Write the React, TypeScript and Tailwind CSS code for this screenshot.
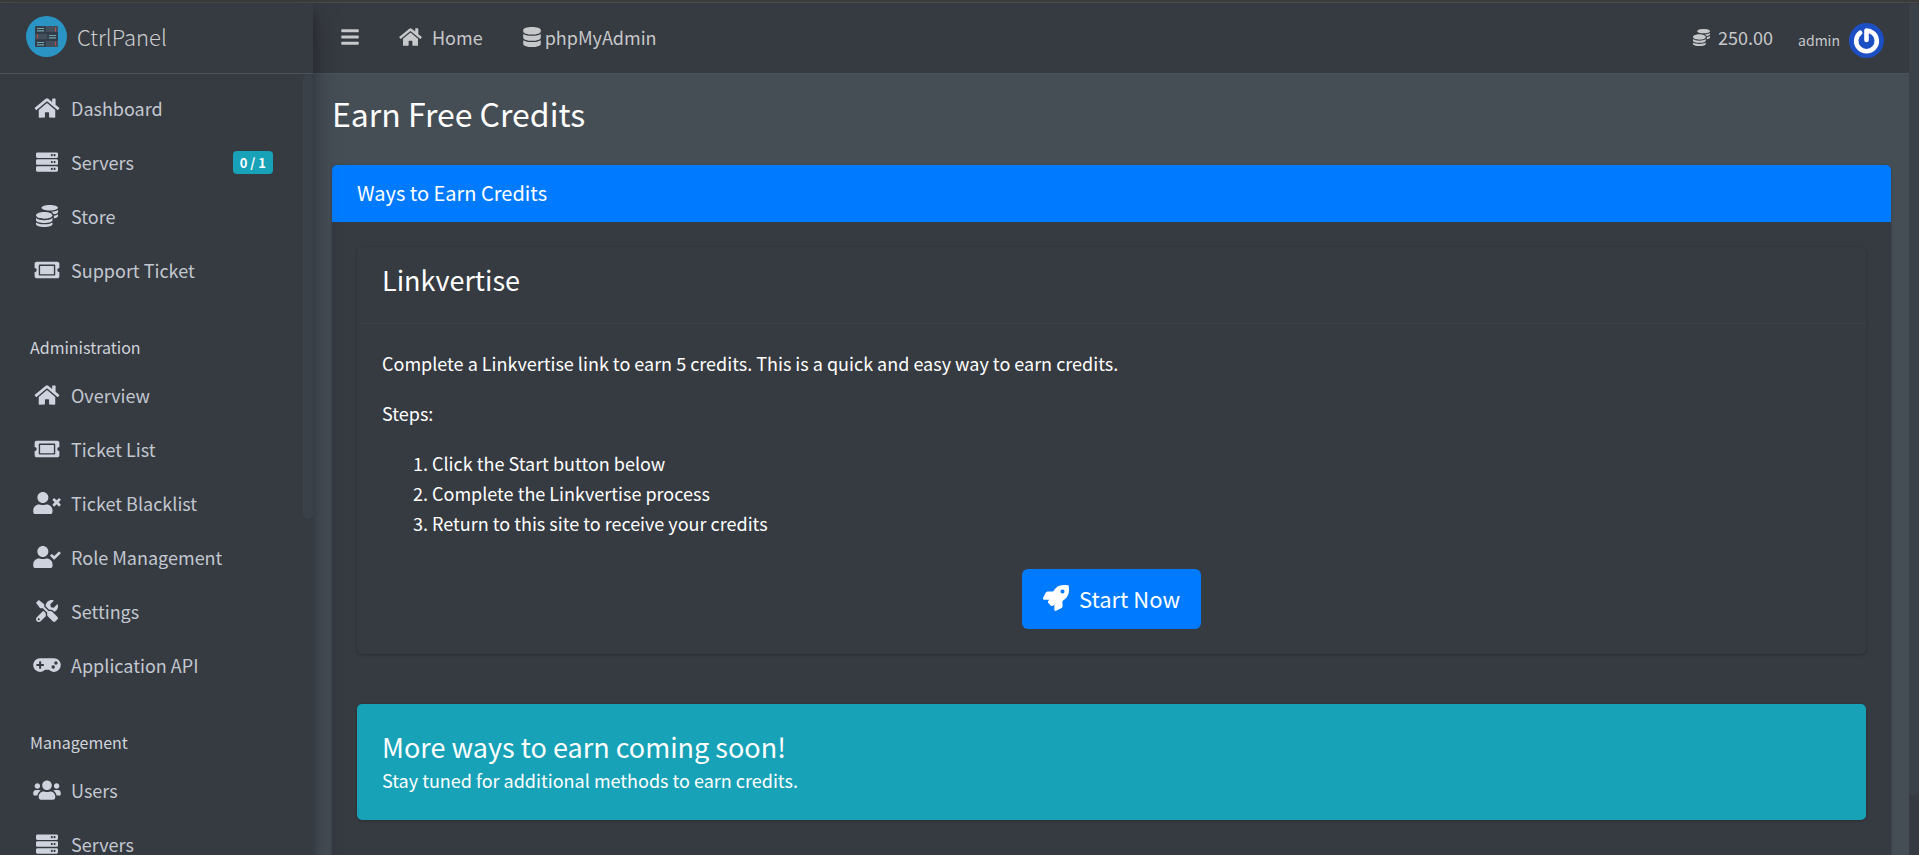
import React, { useState } from 'react';
import type { IconType } from 'react-icons';
import {
    FaBars,
    FaCoins,
    FaDatabase,
    FaGamepad,
    FaHome,
    FaRocket,
    FaServer,
    FaTicketAlt,
    FaTools,
    FaUserCheck,
    FaUsers,
    FaUserTimes,
} from 'react-icons/fa';

interface NavItem {
    label: string;
    icon: IconType;
    badge?: string;
}

interface NavGroup {
    title?: string;
    items: NavItem[];
}

const navGroups: NavGroup[] = [
    {
        items: [
            { label: 'Dashboard', icon: FaHome },
            { label: 'Servers', icon: FaServer, badge: '0 / 1' },
            { label: 'Store', icon: FaCoins },
            { label: 'Support Ticket', icon: FaTicketAlt },
        ],
    },
    {
        title: 'Administration',
        items: [
            { label: 'Overview', icon: FaHome },
            { label: 'Ticket List', icon: FaTicketAlt },
            { label: 'Ticket Blacklist', icon: FaUserTimes },
            { label: 'Role Management', icon: FaUserCheck },
            { label: 'Settings', icon: FaTools },
            { label: 'Application API', icon: FaGamepad },
        ],
    },
    {
        title: 'Management',
        items: [
            { label: 'Users', icon: FaUsers },
            { label: 'Servers', icon: FaServer },
        ],
    },
];

const steps = [
    'Click the Start button below',
    'Complete the Linkvertise process',
    'Return to this site to receive your credits',
];

const Logo: React.FC = () => (
    <svg viewBox="0 0 41 41" className="h-[41px] w-[41px] shrink-0" aria-hidden="true">
        <circle cx="20.5" cy="20.5" r="20.5" fill="#2a94c4" />
        <rect x="9" y="10" width="23" height="21" rx="1" fill="#34414d" />
        <path d="M20 10h12v6.500h-12zM9 17.500h12v6.500h-12zM20 24.500h12v6.500h-12z" fill="#43505c" />
        <path d="M9 17h23M9 24h23" stroke="#2b3540" strokeWidth="1" />
        <path d="M11 12.500h7M11 14.800h7M23 19.500h7M23 21.800h7M11 26.500h7M11 28.800h7" stroke="#6fa3a6" strokeWidth="1.200" />
        <path d="M29.500 11.500v4M11.500 18.500v4M29.500 25.500v4" stroke="#b8504c" strokeWidth="1" />
    </svg>
);

const Avatar: React.FC = () => (
    <svg viewBox="0 0 35 35" className="h-[35px] w-[35px]" role="img" aria-label="User avatar">
        <circle cx="17.500" cy="17.500" r="17.500" fill="#1d4fc4" />
        <path
            d="M11.200 9.800A10.300 10.300 0 1 0 23.800 9.800Q21 7.800 17.500 7.500V17"
            fill="none"
            stroke="#ffffff"
            strokeWidth="4.600"
            strokeLinecap="round"
            strokeLinejoin="round"
        />
    </svg>
);

const Sidebar: React.FC = () => (
    <aside className="relative z-10 flex w-[313px] shrink-0 flex-col bg-[#363a41] shadow-[0_14px_28px_rgba(0,0,0,0.25),0_10px_10px_rgba(0,0,0,0.22)]">
        <a href="#" className="flex h-[71px] shrink-0 items-center gap-2.5 border-b border-[#4b545c] pl-[26px] pb-1">
            <Logo />
            <span className="text-[22px] leading-8 font-light text-[#cccdcf]">CtrlPanel</span>
        </a>
        <div className="flex min-h-0 flex-1">
            <nav className="flex-1 overflow-hidden pt-[9px] pl-2.5">
                {navGroups.map((group, index) => (
                    <div key={index}>
                        {group.title && (
                            <h2 className="px-5 pt-[35px] pb-[9px] text-base leading-[27px] text-[#d0d4db]">{group.title}</h2>
                        )}
                        <ul>
                            {group.items.map((item) => (
                                <li key={item.label} className="mb-1">
                                    <a href="#" className="flex h-[50px] items-center pr-[30px] pl-[21px] text-lg text-[#c2c7d0]">
                                        <span className="mr-2 flex w-8 justify-center text-[#ced3dd]">
                                            <item.icon className="h-[22px] w-7 shrink-0" />
                                        </span>
                                        {item.label}
                                        {item.badge && (
                                            <span className="ml-auto rounded bg-[#17a2b8] px-[7px] text-[13px] leading-[23px] font-bold text-white">
                                                {item.badge}
                                            </span>
                                        )}
                                    </a>
                                </li>
                            ))}
                        </ul>
                    </div>
                ))}
            </nav>
            <div className="w-2.5">
                <div className="h-[57%] rounded-full bg-[#3b4149]" />
            </div>
        </div>
    </aside>
);

const Navbar: React.FC<{ onToggle: () => void }> = ({ onToggle }) => (
    <header className="flex h-[71px] shrink-0 items-center justify-between border-b border-[#4b545c] bg-[#363a41] pr-[25px] pb-0.5 pl-7 text-lg text-[#c6c8ca]">
        <div className="flex items-center gap-10">
            <button type="button" onClick={onToggle} aria-label="Toggle sidebar">
                <FaBars className="h-5 w-[18px]" />
            </button>
            <a href="#" className="flex items-center gap-2.5">
                <FaHome className="h-5 w-[23px]" />
                Home
            </a>
            <a href="#" className="flex items-center gap-1">
                <FaDatabase className="h-5 w-[18px]" />
                phpMyAdmin
            </a>
        </div>
        <div className="flex items-center gap-[25px]">
            <a href="#" className="flex items-center gap-2">
                <FaCoins className="h-[17px] w-[17px]" />
                250.00
            </a>
            <a href="#" className="flex items-center gap-[9px] pt-1.5">
                <span className="text-sm">admin</span>
                <Avatar />
            </a>
        </div>
    </header>
);

const App: React.FC = () => {
    const [sidebarOpen, setSidebarOpen] = useState<boolean>(true);

    return (
        <div className="flex h-screen flex-col overflow-hidden bg-[#454d55] font-['Source_Sans_Pro','Noto_Sans_CJK_SC',sans-serif] text-white">
            <div className="h-[3px] shrink-0 border-b border-[#4a4a4a] bg-[#3b3b3b]" />
            <div className="flex min-h-0 flex-1">
                {sidebarOpen && <Sidebar />}
                <div className="flex min-w-0 flex-1 flex-col">
                    <Navbar onToggle={() => setSidebarOpen((prev) => !prev)} />
                    <main className="min-h-0 flex-1 overflow-hidden pr-[18px] pl-[19px]">
                        <h1 className="pt-[18px] pb-[30px] text-[32px] leading-[43px]">Earn Free Credits</h1>

                        <section className="rounded-[5px] bg-[#363a41] shadow-[0_0_1px_rgba(0,0,0,0.13),0_1px_3px_rgba(0,0,0,0.2)]">
                            <div className="rounded-t-[5px] bg-[#007bff] px-[25px] pt-[15px] pb-4">
                                <h3 className="text-xl leading-[26px]">Ways to Earn Credits</h3>
                            </div>
                            <div className="p-[25px] text-lg leading-[30px]">
                                {/* Linkvertise */}
                                <div className="mb-[50px] rounded-[5px] shadow-[0_0_1px_rgba(0,0,0,0.13),0_1px_3px_rgba(0,0,0,0.2)]">
                                    <div className="border-b border-[#3b4047] px-[25px] pt-[15px] pb-[25px]">
                                        <h4 className="text-[27px] leading-9">Linkvertise</h4>
                                    </div>
                                    <div className="px-[25px] pt-6 pb-[25px]">
                                        <p className="mb-5">
                                            Complete a Linkvertise link to earn 5 credits. This is a quick and easy way to earn credits.
                                        </p>
                                        <p className="mb-5">Steps:</p>
                                        <ol className="list-decimal pl-[50px]">
                                            {steps.map((step) => (
                                                <li key={step}>{step}</li>
                                            ))}
                                        </ol>
                                        <div className="mt-[31px] flex justify-center">
                                            <button
                                                type="button"
                                                className="flex h-[60px] items-center gap-2.5 rounded-md bg-[#007bff] px-[21px] pb-0.5 text-[22px] hover:bg-[#0069d9]"
                                            >
                                                <FaRocket className="h-[26px] w-[26px]" />
                                                Start Now
                                            </button>
                                        </div>
                                    </div>
                                </div>

                                {/* Coming soon */}
                                <div className="mb-5 rounded-[5px] bg-[#17a2b8] p-[25px] shadow-[0_0_1px_rgba(0,0,0,0.13),0_1px_3px_rgba(0,0,0,0.2)]">
                                    <h4 className="text-[27px] leading-9">More ways to earn coming soon!</h4>
                                    <p>Stay tuned for additional methods to earn credits.</p>
                                </div>
                            </div>
                        </section>
                    </main>
                </div>
                {/* Page scrollbar */}
                <div className="w-2.5 shrink-0 bg-[#363a41]">
                    <div className="h-[93%] rounded-full bg-[#3b4149]" />
                </div>
            </div>
        </div>
    );
};

export default App;
